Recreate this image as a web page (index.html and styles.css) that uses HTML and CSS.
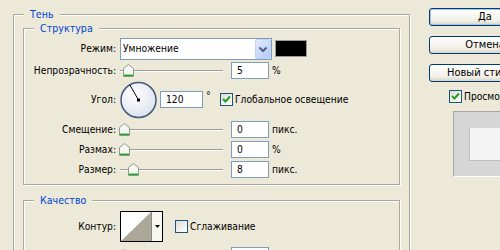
FILE: index.html
```html
<!DOCTYPE html>
<html lang="ru">
  <head>
    <meta charset="UTF-8" />
    <title>Стиль слоя — Тень</title>
    <link rel="stylesheet" href="styles.css">
  </head>

  <body>
    <div class="dialog">
      <fieldset class="group outer">
        <legend>Тень</legend>

        <fieldset class="group">
          <legend>Структура</legend>

          <div class="row r-mode">
            <label class="lbl">Режим:</label>
            <div class="combo">
              <span class="combo-text">Умножение</span>
              <span class="combo-btn">
                <svg width="14" height="18" viewBox="0 0 14 18"><path d="M3.5 7.5 L7 11 L10.5 7.5" fill="none" stroke="#4d6185" stroke-width="2"/></svg>
              </span>
            </div>
            <span class="swatch"></span>
          </div>

          <div class="row r-small">
            <label class="lbl">Непрозрачность:</label>
            <div class="slider">
              <span class="thumb" style="left: 3px"><svg width="11" height="13" viewBox="0 0 11 13"><path d="M0.5 4.5 L5.5 0.5 L10.5 4.5 V12.5 H0.5 Z" fill="#f6f6f2" stroke="#8e9a8e"/><path d="M1 10.5 H10" stroke="#8fdc8f"/><path d="M1 11.5 H10" stroke="#21a121"/></svg></span>
            </div>
            <input class="num" type="text" value="5" />
            <span class="unit">%</span>
          </div>

          <div class="row r-angle">
            <label class="lbl">Угол:</label>
            <svg class="dial" width="37" height="38" viewBox="0 0 37 38">
              <defs>
                <radialGradient id="dialFill" cx="40%" cy="35%" r="70%">
                  <stop offset="0" stop-color="#ffffff"/>
                  <stop offset="1" stop-color="#dce1ed"/>
                </radialGradient>
              </defs>
              <circle cx="18.5" cy="19" r="17.5" fill="url(#dialFill)" stroke="#45577e" stroke-width="1.5"/>
              <line x1="18.5" y1="19" x2="9.8" y2="3.9" stroke="#000"/>
              <rect x="17" y="17.5" width="3" height="3" fill="#000"/>
            </svg>
            <input class="num wide" type="text" value="120" />
            <span class="deg">°</span>
            <span class="check on"><svg width="11" height="11" viewBox="0 0 11 11"><path d="M2 5 L4.5 7.5 L9 2.5" fill="none" stroke="#21a121" stroke-width="2"/></svg></span>
            <span class="check-lbl">Глобальное освещение</span>
          </div>

          <div class="row r-small">
            <label class="lbl">Смещение:</label>
            <div class="slider">
              <span class="thumb" style="left: -1px"><svg width="11" height="13" viewBox="0 0 11 13"><path d="M0.5 4.5 L5.5 0.5 L10.5 4.5 V12.5 H0.5 Z" fill="#f6f6f2" stroke="#8e9a8e"/><path d="M1 10.5 H10" stroke="#8fdc8f"/><path d="M1 11.5 H10" stroke="#21a121"/></svg></span>
            </div>
            <input class="num" type="text" value="0" />
            <span class="unit">пикс.</span>
          </div>

          <div class="row r-small">
            <label class="lbl">Размах:</label>
            <div class="slider">
              <span class="thumb" style="left: -1px"><svg width="11" height="13" viewBox="0 0 11 13"><path d="M0.5 4.5 L5.5 0.5 L10.5 4.5 V12.5 H0.5 Z" fill="#f6f6f2" stroke="#8e9a8e"/><path d="M1 10.5 H10" stroke="#8fdc8f"/><path d="M1 11.5 H10" stroke="#21a121"/></svg></span>
            </div>
            <input class="num" type="text" value="0" />
            <span class="unit">%</span>
          </div>

          <div class="row r-small">
            <label class="lbl">Размер:</label>
            <div class="slider">
              <span class="thumb" style="left: 8px"><svg width="11" height="13" viewBox="0 0 11 13"><path d="M0.5 4.5 L5.5 0.5 L10.5 4.5 V12.5 H0.5 Z" fill="#f6f6f2" stroke="#8e9a8e"/><path d="M1 10.5 H10" stroke="#8fdc8f"/><path d="M1 11.5 H10" stroke="#21a121"/></svg></span>
            </div>
            <input class="num" type="text" value="8" />
            <span class="unit">пикс.</span>
          </div>
        </fieldset>

        <fieldset class="group quality">
          <legend>Качество</legend>

          <div class="row r-contour">
            <label class="lbl">Контур:</label>
            <div class="contour">
              <svg width="30" height="29" viewBox="0 0 30 29"><polygon points="0,29 30,0 30,29" fill="#aca899"/></svg>
              <span class="contour-btn"><svg width="5" height="3" viewBox="0 0 5 3"><polygon points="0,0 5,0 2.5,3" fill="#000"/></svg></span>
            </div>
            <span class="check off"></span>
            <span class="check-lbl">Сглаживание</span>
          </div>

          <div class="row r-small r-noise">
            <label class="lbl">Шум:</label>
            <div class="slider">
              <span class="thumb" style="left: -1px"><svg width="11" height="13" viewBox="0 0 11 13"><path d="M0.5 4.5 L5.5 0.5 L10.5 4.5 V12.5 H0.5 Z" fill="#f6f6f2" stroke="#8e9a8e"/><path d="M1 10.5 H10" stroke="#8fdc8f"/><path d="M1 11.5 H10" stroke="#21a121"/></svg></span>
            </div>
            <input class="num" type="text" value="0" />
            <span class="unit">%</span>
          </div>
        </fieldset>
      </fieldset>

      <div class="side">
        <button class="btn default">Да</button>
        <button class="btn">Отмена</button>
        <button class="btn">Новый стиль...</button>
        <div class="preview-row">
          <span class="check on"><svg width="11" height="11" viewBox="0 0 11 11"><path d="M2 5 L4.5 7.5 L9 2.5" fill="none" stroke="#21a121" stroke-width="2"/></svg></span>
          <span class="check-lbl">Просмотр</span>
        </div>
        <div class="preview">
          <div class="preview-square"></div>
        </div>
      </div>
    </div>
  </body>
</html>
```

FILE: styles.css
```css
body {
  margin: 0;
  background: #ece9d8;
  font-family: Tahoma, "DejaVu Sans Condensed", "Liberation Sans", sans-serif;
  font-size: 10.2px;
  color: #000;
  overflow: hidden;
}

.dialog {
  display: flex;
  align-items: flex-start;
  padding: 8px 0 0 13px;
  width: 620px;
}

/* рамки групп */
.group {
  margin: 0;
  padding: 2px 0 5px;
  border: 1px solid #aca899;
  box-shadow: 1px 1px 0 #fff, inset 1px 1px 0 #fff;
  min-width: 0;
}

.group legend {
  color: #0046d5;
  padding: 0 6px;
  margin-left: 10px;
  line-height: 13px;
  background: #ece9d8;
  font-size: 10.6px;
}

.outer {
  flex: none;
  width: 397px;
  height: 300px;
  box-sizing: border-box;
  padding: 1px 9px 0;
}

.outer > legend {
  margin-left: 1px;
}

.quality {
  margin-top: 9px;
  padding-top: 3px;
}

.row {
  display: flex;
  align-items: center;
}

.r-mode {
  height: 23px;
}

.r-small {
  height: 20px;
}

.r-angle {
  height: 39px;
}

.r-contour {
  height: 33px;
}

.r-noise {
  margin-top: 2px;
}

.lbl {
  flex: none;
  width: 92px;
  margin-right: 4px;
  text-align: right;
  white-space: nowrap;
}

/* выпадающий список */
.combo {
  display: flex;
  width: 152px;
  height: 22px;
  box-sizing: border-box;
  border: 1px solid #7f9db9;
  background: #fff;
}

.combo-text {
  flex: 1;
  padding-left: 2px;
  line-height: 20px;
}

.combo-btn {
  display: flex;
  align-items: center;
  justify-content: center;
  width: 16px;
  box-sizing: border-box;
  border: 1px solid #c3d3f8;
  border-radius: 2px;
  background: linear-gradient(135deg, #e2ebfe, #b6caf7);
}

.swatch {
  width: 32px;
  height: 17px;
  box-sizing: border-box;
  margin-left: 3px;
  border: 1px solid #9a9a9a;
  background: #000;
}

/* ползунки */
.slider {
  position: relative;
  flex: none;
  width: 103px;
  height: 13px;
}

.slider::before {
  content: "";
  position: absolute;
  left: 0;
  right: 0;
  top: 6px;
  height: 1px;
  background: #9d9c99;
  border-bottom: 1px solid #fff;
}

.thumb {
  position: absolute;
  top: 0;
  display: block;
  height: 13px;
}

.thumb svg {
  display: block;
}

.num {
  width: 38px;
  height: 17px;
  box-sizing: border-box;
  margin: 0 0 0 8px;
  padding: 0 0 0 5px;
  border: 1px solid #7f9db9;
  font: inherit;
  color: #000;
  background: #fff;
  outline: none;
}

.num.wide {
  width: 43px;
  margin-left: 3px;
}

.unit {
  margin-left: 3px;
}

.deg {
  align-self: flex-start;
  margin: 10px 0 0 3px;
  width: 6px;
}

.dial {
  flex: none;
  display: block;
}

/* флажки */
.check {
  flex: none;
  display: flex;
  align-items: center;
  justify-content: center;
  width: 13px;
  height: 13px;
  box-sizing: border-box;
  border: 1px solid #1c5180;
  background: linear-gradient(135deg, #dcdcd5, #fff);
}

.r-angle .check {
  margin-left: 8px;
}

.check-lbl {
  margin-left: 2px;
  white-space: nowrap;
}

.contour {
  display: flex;
  width: 43px;
  height: 31px;
  box-sizing: border-box;
  border: 1px solid #000;
  background: #fff;
}

.contour svg {
  display: block;
}

.contour-btn {
  flex: 1;
  display: flex;
  align-items: center;
  justify-content: center;
  border-left: 1px solid #8a8a8a;
  background: #f7f6f0;
}

.r-contour .check {
  margin-left: 12px;
}

/* правая колонка */
.side {
  flex: none;
  margin-left: 19px;
  display: flex;
  flex-direction: column;
  align-items: flex-start;
}

.btn {
  width: 112px;
  height: 18px;
  margin: 0 0 10px;
  padding: 0;
  border: 1px solid #003c74;
  border-radius: 3px;
  background: linear-gradient(#fff, #f1efe6 75%, #d8d2c6);
  font: inherit;
  font-size: 11px;
  color: #000;
  line-height: 16px;
}

.btn.default {
  box-shadow: inset 0 0 0 1px #a8c2f0;
}

.preview-row {
  display: flex;
  align-items: center;
  margin: -2px 0 0 20px;
}

.preview {
  width: 66px;
  height: 66px;
  box-sizing: border-box;
  margin: 8px 0 0 24px;
  padding: 16px 0 0 15px;
  border-left: 1px solid #a6a6a6;
  border-top: 1px solid #a6a6a6;
  border-bottom: 1px solid #fff;
  background: #d6d6d6;
}

.preview-square {
  width: 33px;
  height: 33px;
  box-sizing: border-box;
  border-left: 1px solid #bdbdbd;
  border-bottom: 1px solid #bdbdbd;
  background: #f4f4f4;
}
```
